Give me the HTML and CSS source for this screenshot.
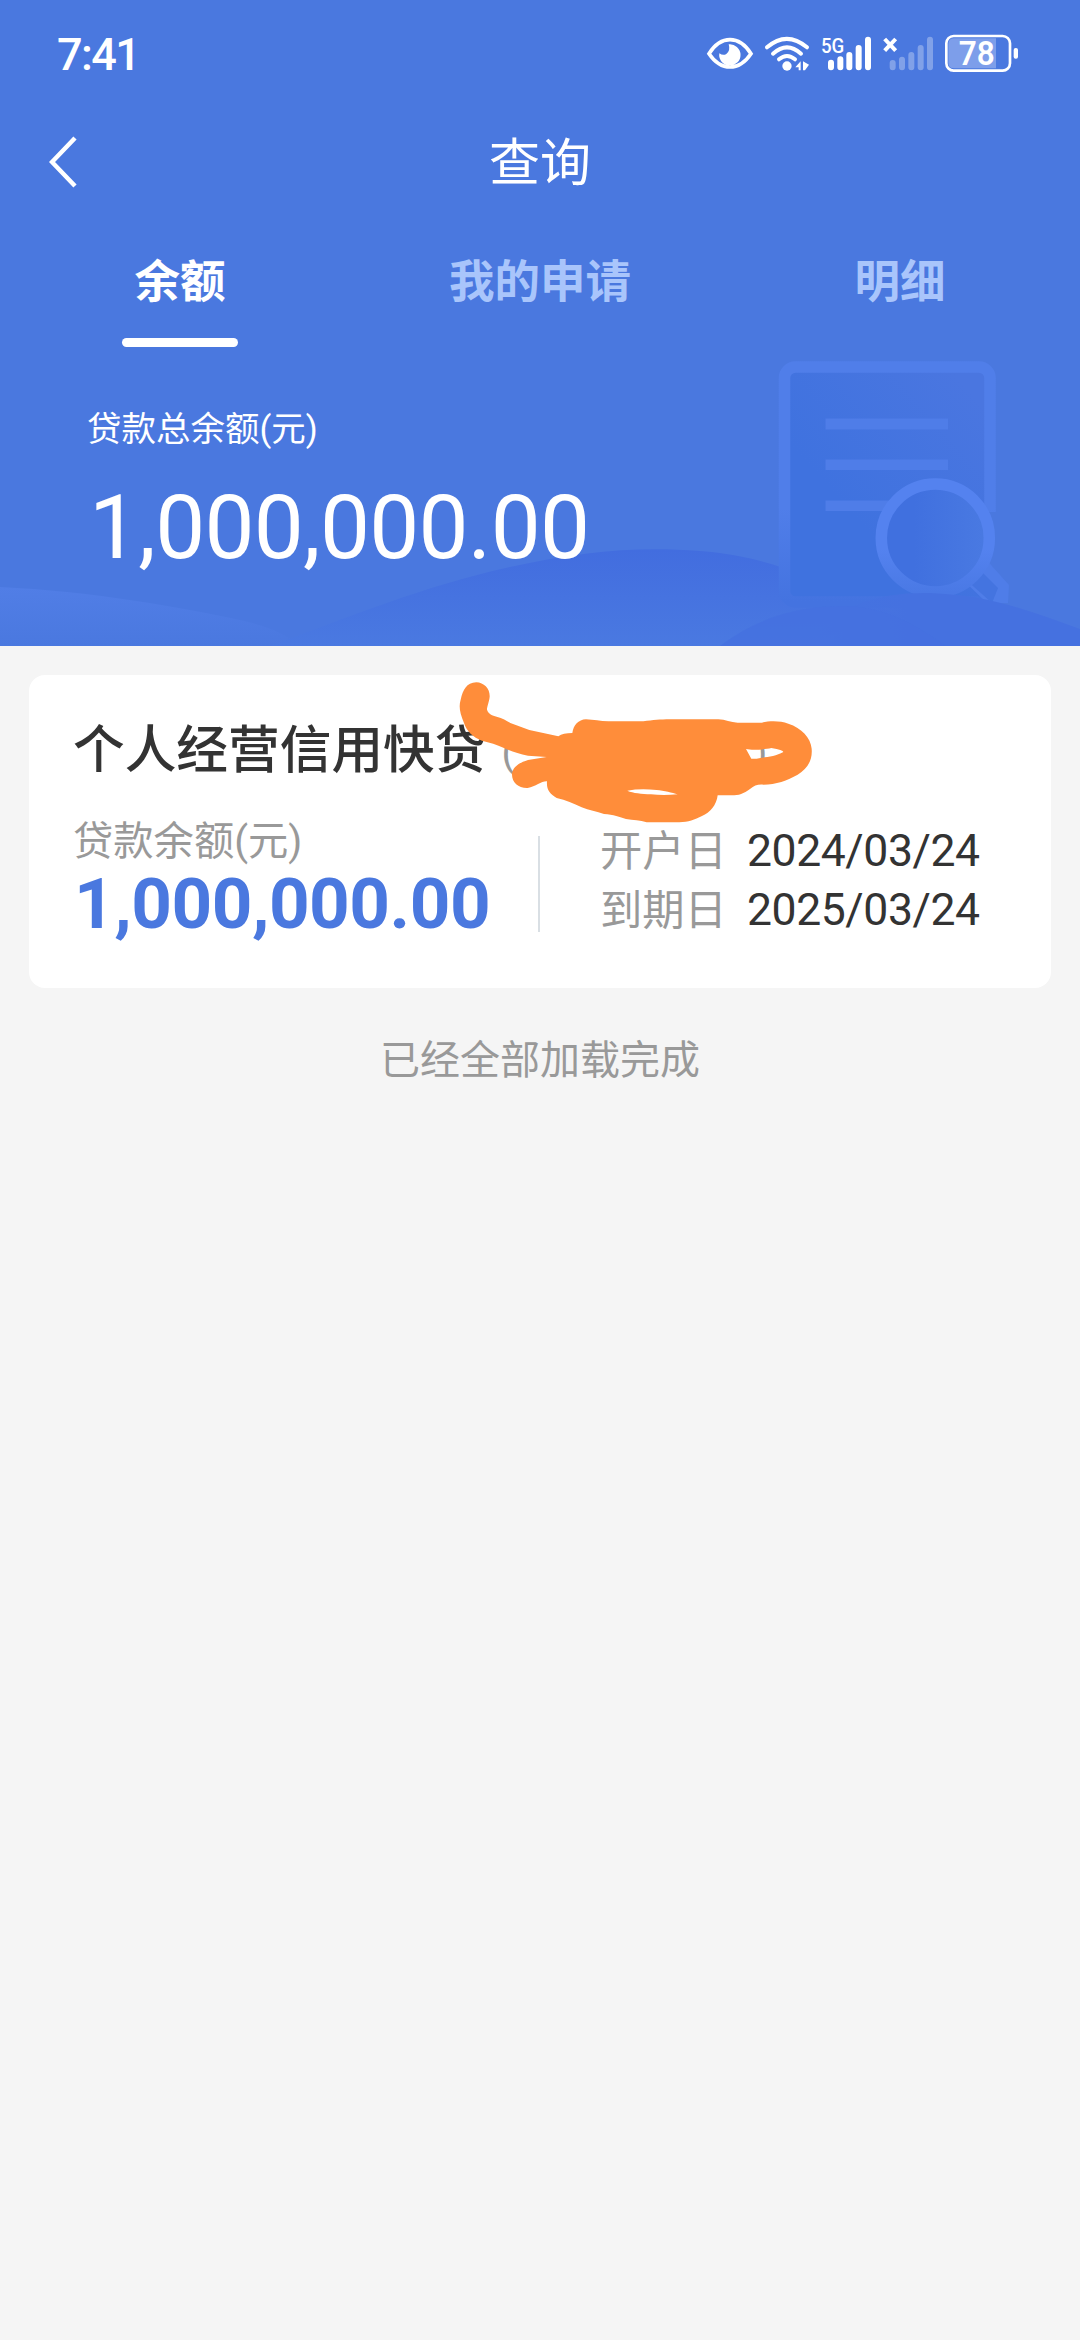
FILE: index.html
```html
<!DOCTYPE html>
<html lang="zh-CN">
<head>
<meta charset="utf-8">
<title>查询</title>
<link rel="stylesheet" href="styles.css">
</head>
<body>
<header class="hero">
  <svg class="hero-art" viewBox="0 0 1080 646" aria-hidden="true">
    <defs>
      <linearGradient id="hill" x1="0" y1="0" x2="0" y2="1"><stop offset="0" stop-color="#426ddf"/><stop offset="1" stop-color="#4a79e1"/></linearGradient>
      <linearGradient id="mist" x1="0" y1="0" x2="0" y2="1"><stop offset="0" stop-color="#517ee6"/><stop offset="1" stop-color="#4a78df"/></linearGradient>
      <linearGradient id="sheet" x1="0" y1="1" x2="1" y2="0"><stop offset="0.35" stop-color="#3f72df"/><stop offset="0.9" stop-color="#4a76e0"/></linearGradient>
      <linearGradient id="edge" x1="0" y1="0" x2="0" y2="1"><stop offset="0.6" stop-color="#507ee9"/><stop offset="1" stop-color="#4473e0"/></linearGradient>
      <linearGradient id="ring" x1="0" y1="0" x2="0" y2="1"><stop offset="0.6" stop-color="#5482ef"/><stop offset="1" stop-color="#4a79e5"/></linearGradient>
      <linearGradient id="lens" x1="0" y1="0" x2="1" y2="0"><stop offset="0.3" stop-color="#4070df"/><stop offset="1" stop-color="#4a7ae2"/></linearGradient>
      <linearGradient id="front" x1="0" y1="0" x2="1" y2="0"><stop offset="0.1" stop-color="#4571e0" stop-opacity="0"/><stop offset="0.4" stop-color="#4571e0"/></linearGradient>
    </defs>
    <path fill="url(#mist)" d="M0 587C90 591 180 607 240 620C270 627 285 634 300 646H0Z"/>
    <path fill="url(#hill)" d="M270 646C350 617 420 587 510 567C580 551 640 546 700 551C760 556 790 570 850 592L960 646Z"/>
    <rect x="784.5" y="367" width="205.500" height="235" rx="11" fill="url(#sheet)" stroke="url(#edge)" stroke-width="11.500"/>
    <path fill="#4a78df" d="M983 512H998V612H983Z"/>
    <path fill="#4f7de8" d="M825.500 418.500H948v11H825.500zM825.500 459.500H948v10.500H825.500zM825.500 500.500H900v10.500H825.500z"/>
    <path fill="#4f7de8" d="M983 556L1009 585L1008 603H987L962 579L953 585L970 565Z"/>
    <path fill="#4474e0" d="M976 566L998 588L992 603L964 578Z"/>
    <circle cx="935.300" cy="538" r="54" fill="url(#lens)" stroke="url(#ring)" stroke-width="11.500"/>
    <path fill="url(#front)" d="M790 646C840 604 880 592 930 593C990 595 1030 611 1080 629V646Z"/>
    <path fill="#4570e0" opacity=".8" d="M720 646C760 616 800 606 845 606C880 607 910 620 945 646Z"/>
  </svg>

  <div class="status">
    <span class="clock">7:41</span>
    <svg class="status-icons" viewBox="0 0 1050 210" aria-hidden="true">
      <path d="M57 101Q84 59 120 59T183 101Q156 141 120 141T57 101Z" fill="none" stroke="#fff" stroke-width="11"/>
      <path fill="#fff" d="M116 73A32 32 0 1 1 88 100Q99 108 109 102Q122 92 116 73Z"/>
      <g fill="none" stroke="#fff" stroke-width="12" stroke-linecap="round">
        <path d="M231 82Q290 31 351 82"/><path d="M249 101Q291 63 333 101"/><path d="M267 118Q291 98 315 118"/>
      </g>
      <circle cx="291" cy="138" r="14" fill="#fff"/>
      <path fill="#fff" d="M316 142L332 124V151H326V142ZM339 124L357 134L345 151H339Z"/>
      <text class="net" x="393" y="98" textLength="70" lengthAdjust="spacingAndGlyphs">5G</text>
      <g stroke="#fff" stroke-width="18" stroke-linecap="round">
        <path d="M423 128V142M451 118V142M478 105V142M506 84V142M534 59V142"/>
        <path opacity=".3" d="M608 129V142M636 119V142M664 105V142M692 84V142M720 59V142"/>
      </g>
      <path d="M584 57L617 92M617 57L584 92" stroke="#fff" stroke-width="12"/>
      <path fill="#7d9eea" d="M792 55H918V145H792Q775 145 775 128V72Q775 55 792 55Z"/>
      <rect x="769" y="48" width="191" height="104" rx="22" fill="none" stroke="#fff" stroke-width="8"/>
      <rect x="971" y="84" width="13" height="32" rx="6" fill="#fff"/>
      <text class="charge" x="806" y="134" textLength="108" lengthAdjust="spacingAndGlyphs">78</text>
    </svg>
  </div>

  <nav class="bar">
    <svg class="back" viewBox="0 0 30 52"><path d="M26 2L3 26L26 50" fill="none" stroke="#fff" stroke-width="4.500"/></svg>
    <h1 class="title">查询</h1>
  </nav>

  <div class="tabs">
    <span class="tab active">余额</span>
    <span class="tab">我的申请</span>
    <span class="tab">明细</span>
  </div>

  <div class="total">
    <div class="total-label">贷款总余额(元)</div>
    <div class="total-amount">1,000,000.00</div>
  </div>
</header>

<main class="content">
  <article class="card">
    <h2 class="card-title">个人经营信用快贷<span class="account"><span>(一</span><span>)</span></span></h2>
    <div class="card-body">
      <div class="balance">
        <div class="balance-label">贷款余额(元)</div>
        <div class="balance-amount">1,000,000.00</div>
      </div>
      <dl class="dates">
        <div class="date-row"><dt>开户日</dt><dd>2024/03/24</dd></div>
        <div class="date-row"><dt>到期日</dt><dd>2025/03/24</dd></div>
      </dl>
    </div>
    <svg class="scribble" viewBox="0 0 1200 540" aria-hidden="true">
      <path fill="#ff8d3a" fill-rule="evenodd" d="M109 67C132 68 150 86 149 110C147 128 141 139 141 149C145 161 157 167 170 170C188 175 200 182 211 189L268 210L355 229Q369 219 397 219C400 196 415 179 438 178C462 179 480 184 505 184H610C640 180 660 178 690 178H835C856 179 872 187 893 188H965C990 182 1020 182 1045 191C1085 204 1112 233 1115 266C1118 303 1101 326 1073 344C1042 361 1008 374 970 374C955 372 942 377 931 386C910 401 897 406 875 406H833C830 435 810 458 786 468C764 479 745 486 718 487H620C600 480 580 481 558 477C540 471 520 464 492 462C470 454 447 452 425 442C400 431 378 420 350 414C329 402 319 388 321 364C304 363 288 380 263 384C235 385 215 367 216 342C218 322 235 309 264 300L320 291L264 287C235 281 213 274 190 263C172 254 148 247 126 242C99 232 80 214 72 189C59 158 56 139 62 119C69 90 79 68 109 67ZM918 267C938 272 974 268 994 264Q1030 270 1030 276C1006 290 976 291 950 296H934ZM562 392Q600 385 650 390C672 392 697 398 713 403Q670 407 633 403C604 401 580 400 562 392Z"/>
    </svg>
  </article>
  <p class="finished">已经全部加载完成</p>
</main>
</body>
</html>
```
FILE: styles.css
```css
* { box-sizing: border-box; margin: 0; padding: 0; }

body {
  width: 1080px;
  min-height: 2340px;
  background: #f5f5f5;
  font-family: Roboto, "Noto Sans CJK SC", sans-serif;
  color: #333;
}

.hero {
  position: relative;
  height: 646px;
  background: #4a78df;
  color: #fff;
}
.hero-art { position: absolute; inset: 0; width: 1080px; height: 646px; }
.status, .bar, .tabs, .total { position: relative; }

.status {
  display: flex;
  justify-content: space-between;
  align-items: center;
  height: 110px;
  padding: 0 40px 0 57px;
}
.clock { padding-bottom: 2px; font-size: 45px; font-weight: 500; letter-spacing: -1.6px; }
.status-icons { width: 350px; height: 70px; }
.net { font: 500 62px Roboto, sans-serif; fill: #fff; }
.charge { font: 600 97px Roboto, sans-serif; fill: #fff; }

.bar {
  display: grid;
  grid-template-columns: 1fr auto 1fr;
  align-items: center;
  height: 104px;
  padding: 0 49px;
}
.back { width: 30px; height: 52px; }
.title { padding-top: 4px; font-size: 51px; font-weight: 400; line-height: 60px; }

.tabs { display: grid; grid-template-columns: repeat(3, 1fr); height: 133px; }
.tab {
  display: flex;
  flex-direction: column;
  align-items: center;
  padding-top: 39px;
  font-size: 45.500px;
  font-weight: 700;
  line-height: 60px;
  color: #a9c5fb;
}
.active { color: #fff; }
.active::after {
  content: "";
  width: 116px;
  height: 9px;
  margin-top: 25px;
  border-radius: 5px;
  background: #fff;
}

.total { padding: 58px 87px 0; }
.total-label { font-size: 34.500px; line-height: 48px; }
.total-amount {
  margin: 22px 0 0 2px;
  font-size: 89px;
  line-height: 106px;
  letter-spacing: -.7px;
}

.content { padding: 29px; }
.card {
  position: relative;
  height: 313px;
  padding: 39px 44px;
  border-radius: 16px;
  background: #fff;
}
.card-title {
  display: flex;
  align-items: center;
  gap: 15px;
  font-size: 51.700px;
  font-weight: 500;
  line-height: 70px;
}
.account {
  display: flex;
  justify-content: space-between;
  width: 266px;
  padding-top: 4px;
  font-size: 40px;
  font-weight: 400;
  color: #999;
}
.card-body { display: flex; }
.balance { width: 465px; padding-top: 26px; }
.balance-label { font-size: 40.300px; line-height: 56px; color: #999; }
.balance-amount {
  margin-top: -5px;
  padding-left: 1px;
  font-size: 71px;
  font-weight: 700;
  line-height: 78px;
  letter-spacing: -.5px;
  color: #4a78df;
}
.dates {
  height: 96px;
  margin-top: 48px;
  padding-left: 60px;
  border-left: 2px solid #d9dfe4;
}
.date-row {
  display: flex;
  gap: 20px;
  height: 59px;
  line-height: 59px;
}
.date-row:first-child { margin-top: -14px; }
.date-row dt { font-size: 42.300px; color: #999; }
.date-row dd { font-size: 44.500px; letter-spacing: -.4px; }

.scribble {
  position: absolute;
  left: 411px;
  top: -15px;
  width: 400px;
  height: 180px;
}
.finished {
  margin-top: 43px;
  text-align: center;
  font-size: 40px;
  line-height: 60px;
  color: #999;
}
```
